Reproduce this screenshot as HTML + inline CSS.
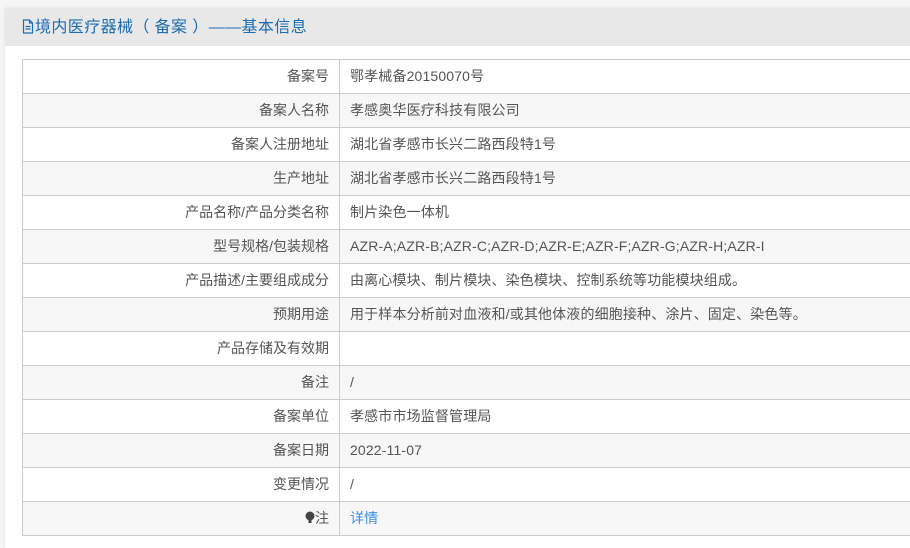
<!DOCTYPE html>
<html><head><meta charset="utf-8"><style>
body{margin:0;background:#f5f5f5;font-family:"Liberation Sans","Noto Sans CJK SC",sans-serif;width:910px;height:533px;overflow:hidden;}
.panel{position:absolute;left:5px;top:8px;width:920px;height:540px;background:#fff;box-shadow:0 0 4px rgba(0,0,0,.08);}
.hd{height:38px;background:#e8e8e8;color:#1a6cb5;font-size:16px;line-height:40px;padding-left:17px;letter-spacing:0.4px;}
table{position:absolute;left:17px;top:51px;border-collapse:collapse;width:900px;font-size:14px;color:#555;}
td{border:1px solid #ccc;height:33px;padding:0;line-height:33px;}
td.l{width:306px;text-align:right;padding-right:10px;}
td.v{padding-left:10px;letter-spacing:0.15px;}
tr:nth-child(even){background:#f7f7f7;}
a{color:#3b8ee8;text-decoration:none;}
</style></head><body>
<div class="panel">
<div class="hd"><svg width="12" height="15" viewBox="0 0 12 15" style="vertical-align:-2px;margin-right:1px"><path d="M1.5 1h6l3 3v10h-9z M7.5 1v3h3 M3.5 7.5h5 M3.5 10h5" fill="none" stroke="#1a6cb5" stroke-width="1.2"/></svg>境内医疗器械（ 备案 ）——基本信息</div>
<table>
<tr><td class="l">备案号</td><td class="v">鄂孝械备20150070号</td></tr>
<tr><td class="l">备案人名称</td><td class="v">孝感奥华医疗科技有限公司</td></tr>
<tr><td class="l">备案人注册地址</td><td class="v">湖北省孝感市长兴二路西段特1号</td></tr>
<tr><td class="l">生产地址</td><td class="v">湖北省孝感市长兴二路西段特1号</td></tr>
<tr><td class="l">产品名称/产品分类名称</td><td class="v">制片染色一体机</td></tr>
<tr><td class="l">型号规格/包装规格</td><td class="v">AZR-A;AZR-B;AZR-C;AZR-D;AZR-E;AZR-F;AZR-G;AZR-H;AZR-I</td></tr>
<tr><td class="l">产品描述/主要组成成分</td><td class="v">由离心模块、制片模块、染色模块、控制系统等功能模块组成。</td></tr>
<tr><td class="l">预期用途</td><td class="v">用于样本分析前对血液和/或其他体液的细胞接种、涂片、固定、染色等。</td></tr>
<tr><td class="l">产品存储及有效期</td><td class="v"></td></tr>
<tr><td class="l">备注</td><td class="v">/</td></tr>
<tr><td class="l">备案单位</td><td class="v">孝感市市场监督管理局</td></tr>
<tr><td class="l">备案日期</td><td class="v">2022-11-07</td></tr>
<tr><td class="l">变更情况</td><td class="v">/</td></tr>
<tr><td class="l"><svg width="10" height="13" viewBox="0 0 10 13" style="vertical-align:-1px"><circle cx="5" cy="5" r="4.5" fill="#444"/><rect x="3.5" y="8.5" width="3" height="3.5" fill="#444"/></svg>注</td><td class="v"><a>详情</a></td></tr>
</table>
</div>
</body></html>
